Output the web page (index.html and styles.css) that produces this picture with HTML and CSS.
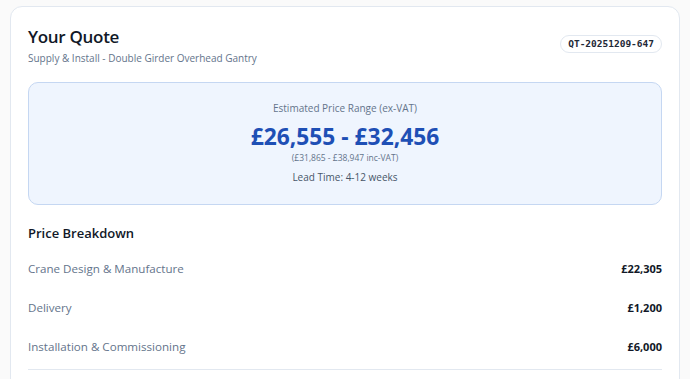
FILE: index.html
```html
<!DOCTYPE html>
<html lang="en">
<head>
<meta charset="utf-8">
<title>Your Quote</title>
<link rel="stylesheet" href="styles.css">
</head>
<body>
<div class="page">
  <section class="card">
    <header class="head">
      <div class="head-text">
        <h1 class="title">Your Quote</h1>
        <p class="subtitle">Supply &amp; Install - Double Girder Overhead Gantry</p>
      </div>
      <span class="ref">QT-20251209-647</span>
    </header>
    <div class="price-box">
      <p class="price-label">Estimated Price Range (ex-VAT)</p>
      <p class="price">£26,555 - £32,456</p>
      <p class="price-vat">(£31,865 - £38,947 inc-VAT)</p>
      <p class="lead">Lead Time: 4-12 weeks</p>
    </div>
    <h2 class="section-title">Price Breakdown</h2>
    <ul class="rows">
      <li class="row"><span class="row-label">Crane Design &amp; Manufacture</span><span class="row-value">£22,305</span></li>
      <li class="row"><span class="row-label">Delivery</span><span class="row-value">£1,200</span></li>
      <li class="row"><span class="row-label">Installation &amp; Commissioning</span><span class="row-value">£6,000</span></li>
    </ul>
    <div class="divider"></div>
  </section>
</div>
</body>
</html>
```
FILE: styles.css
```css
* { box-sizing: border-box; }
html, body { margin: 0; padding: 0; }
body {
  background: #fafafa;
  font-family: "Open Sans", "Noto Sans", sans-serif;
  color: #0f172a;
}
.page { padding: 6px 10px 0; }
.card {
  background: #fff;
  border: 1px solid #e2e8f0;
  border-radius: 12px;
  padding: 19px 17px 40px;
}
.head {
  display: flex;
  justify-content: space-between;
  align-items: flex-start;
}
.title {
  margin: 0;
  font-size: 17px;
  font-weight: 600;
  line-height: 22px;
  letter-spacing: -0.3px;
  color: #111827;
}
.subtitle {
  margin: 3px 0 0;
  font-size: 10px;
  line-height: 14px;
  color: #64748b;
}
.ref {
  margin-top: 9px;
  padding: 2px 7px;
  border: 1px solid #e2e8f0;
  border-radius: 10px;
  font-family: "DejaVu Sans Mono", monospace;
  font-size: 9.5px;
  font-weight: 700;
  line-height: 12px;
  color: #1f2937;
  background: #fff;
}
.price-box {
  margin-top: 17px;
  background: #eff5fe;
  border: 1.5px solid #c5d7f2;
  border-radius: 10px;
  padding: 17px 10px 20px;
  text-align: center;
}
.price-box p { margin: 0; }
.price-label { font-size: 10px; line-height: 16px; color: #64748b; }
.price {
  margin-top: 6px !important;
  font-size: 22.8px;
  font-weight: 700;
  line-height: 30px;
  color: #1e4fb5;
}
.price-vat { margin-top: 0; font-size: 8.5px; line-height: 12px; color: #64748b; }
.lead { margin-top: 6px !important; font-size: 10px; line-height: 14px; color: #475569; }
.section-title {
  margin: 19px 0 0;
  font-size: 13px;
  font-weight: 600;
  line-height: 18px;
  color: #111827;
}
.rows { list-style: none; margin: 7px 0 0; padding: 0; }
.row {
  display: flex;
  justify-content: space-between;
  align-items: center;
  height: 39px;
}
.row-label { font-size: 11.6px; color: #64748b; }
.row-value { font-size: 11px; font-weight: 700; color: #111827; }
.divider { margin-top: 3px; height: 1px; background: #e2e8f0; }
```
